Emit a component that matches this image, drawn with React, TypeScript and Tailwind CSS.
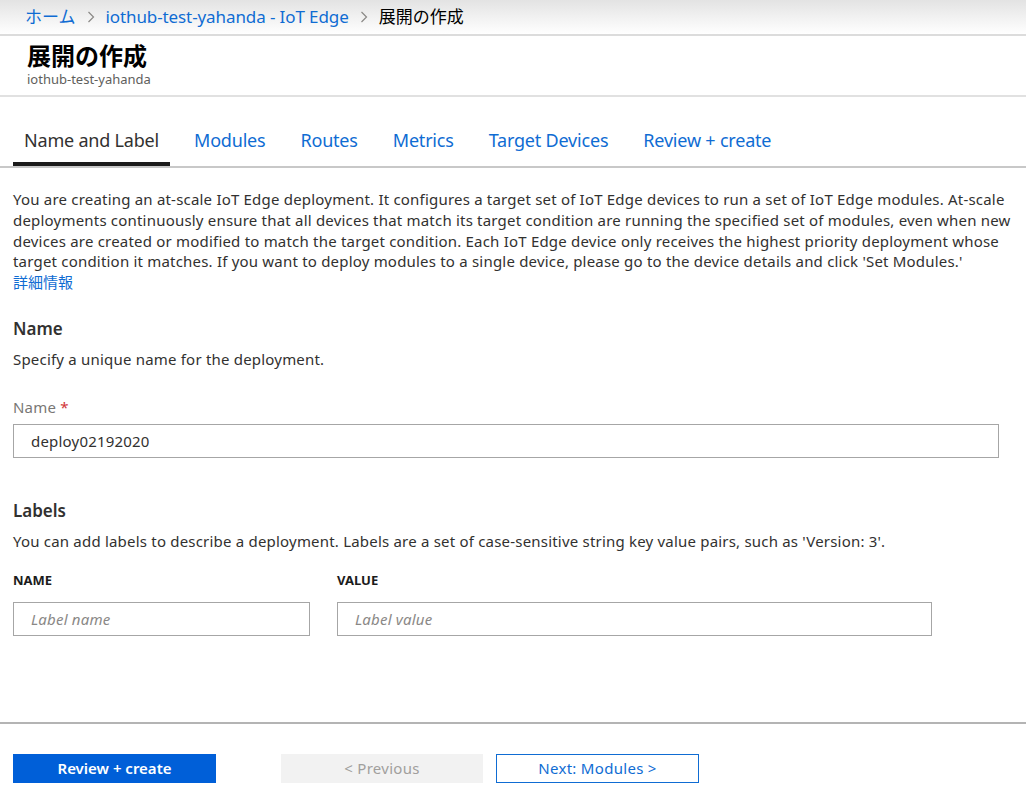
import React from "react";

const font = { fontFamily: '"Noto Sans", "Noto Sans CJK JP", sans-serif' };

function Chevron() {
  return (
    <svg width="8" height="12" viewBox="0 0 8 12" className="shrink-0">
      <path d="M1.5 1 L6.5 6 L1.5 11" fill="none" stroke="#8a8886" strokeWidth="1.2" />
    </svg>
  );
}

export default function App() {
  const tabs = ["Name and Label", "Modules", "Routes", "Metrics", "Target Devices", "Review + create"];
  return (
    <div className="w-[1026px] h-[795px] bg-white text-[#323130] overflow-hidden flex flex-col" style={font}>
      {/* breadcrumb */}
      <div className="h-[36px] shrink-0 flex items-center pl-[25px] gap-[11px] text-[17px] border-b-2 border-[#dcdcdc] bg-gradient-to-b from-[#e3e3e3] to-white">
        <span className="text-[#0f6cd3]">ホーム</span>
        <Chevron />
        <span className="text-[#0f6cd3] tracking-[-0.1px]">iothub-test-yahanda - IoT Edge</span>
        <Chevron />
        <span className="text-black">展開の作成</span>
      </div>
      {/* title */}
      <div className="h-[61px] shrink-0 border-b-2 border-[#e1e1e1] pl-[27px] pt-[6px]">
        <div className="text-[24px] font-bold leading-[28px] text-black">展開の作成</div>
        <div className="mt-[1px] text-[13px] leading-[16px] text-[#605e5c]">iothub-test-yahanda</div>
      </div>
      {/* tabs */}
      <div className="mt-[32px] border-b-2 border-[#c8c8c8] flex pl-[13px] gap-[13px] h-[39px]">
        {tabs.map((t, i) => (
          <div
            key={t}
            className={
              "px-[11px] h-full flex items-start text-[18px] leading-[22px] tracking-[-0.2px] -mb-[2px] " +
              (i === 0 ? "border-b-4 border-[#1b1b1b] text-[#323130]" : "text-[#0f6cd3]")
            }
          >
            {t}
          </div>
        ))}
      </div>
      <div className="px-[13px] pr-[12px] text-[15px] tracking-[0.2px]">
        <p className="mt-[21px] leading-[20.75px] text-[#323130]">
          You are creating an at-scale IoT Edge deployment. It configures a target set of IoT Edge devices to run a set of IoT Edge modules. At-scale deployments continuously ensure that all devices that match its target condition are running the specified set of modules, even when new devices are created or modified to match the target condition. Each IoT Edge device only receives the highest priority deployment whose target condition it matches. If you want to deploy modules to a single device, please go to the device details and click 'Set Modules.'
          <br />
          <span className="text-[#0f6cd3] tracking-normal">詳細情報</span>
        </p>

        <h2 className="mt-[24px] text-[17px] leading-[24px] font-semibold tracking-normal text-[#323130]">Name</h2>
        <div className="mt-[8px] leading-[20px]">Specify a unique name for the deployment.</div>

        <div className="mt-[28px] leading-[20px] text-[#797775]">
          Name <span className="text-[#d13438]">*</span>
        </div>
        <div className="mt-[7px] h-[34px] w-[986px] border border-[#a6a6a6] flex items-center pl-[17px] text-[#323130]">
          deploy02192020
        </div>

        <h2 className="mt-[41px] text-[17px] leading-[24px] font-semibold tracking-normal text-[#323130]">Labels</h2>
        <div className="mt-[8px] leading-[20px]">
          You can add labels to describe a deployment. Labels are a set of case-sensitive string key value pairs, such as 'Version: 3'.
        </div>

        <div className="mt-[21px] flex gap-[27px]">
          <div className="w-[297px]">
            <div className="text-[13px] leading-[16px] font-bold tracking-normal text-[#1b1b1b]">NAME</div>
            <div className="mt-[14px] h-[34px] border border-[#a6a6a6] flex items-center pl-[17px] italic text-[#8a8886]">
              Label name
            </div>
          </div>
          <div className="w-[595px]">
            <div className="text-[13px] leading-[16px] font-bold tracking-normal text-[#1b1b1b]">VALUE</div>
            <div className="mt-[14px] h-[34px] border border-[#a6a6a6] flex items-center pl-[17px] italic text-[#8a8886]">
              Label value
            </div>
          </div>
        </div>
      </div>

      {/* footer */}
      <div className="mt-[86px] border-t-2 border-[#b4b4b4] px-[13px] pt-[30px] flex items-center text-[15px]">
        <div className="w-[203px] h-[29px] bg-[#005fd8] text-white font-semibold flex items-center justify-center">
          Review + create
        </div>
        <div className="ml-[65px] w-[202px] h-[29px] bg-[#f2f2f2] text-[#a19f9d] flex items-center justify-center tracking-[0.3px]">
          &lt; Previous
        </div>
        <div className="ml-[13px] w-[203px] h-[29px] border border-[#0f6cd3] text-[#0f6cd3] flex items-center justify-center tracking-[0.3px]">
          Next: Modules &gt;
        </div>
      </div>
    </div>
  );
}
